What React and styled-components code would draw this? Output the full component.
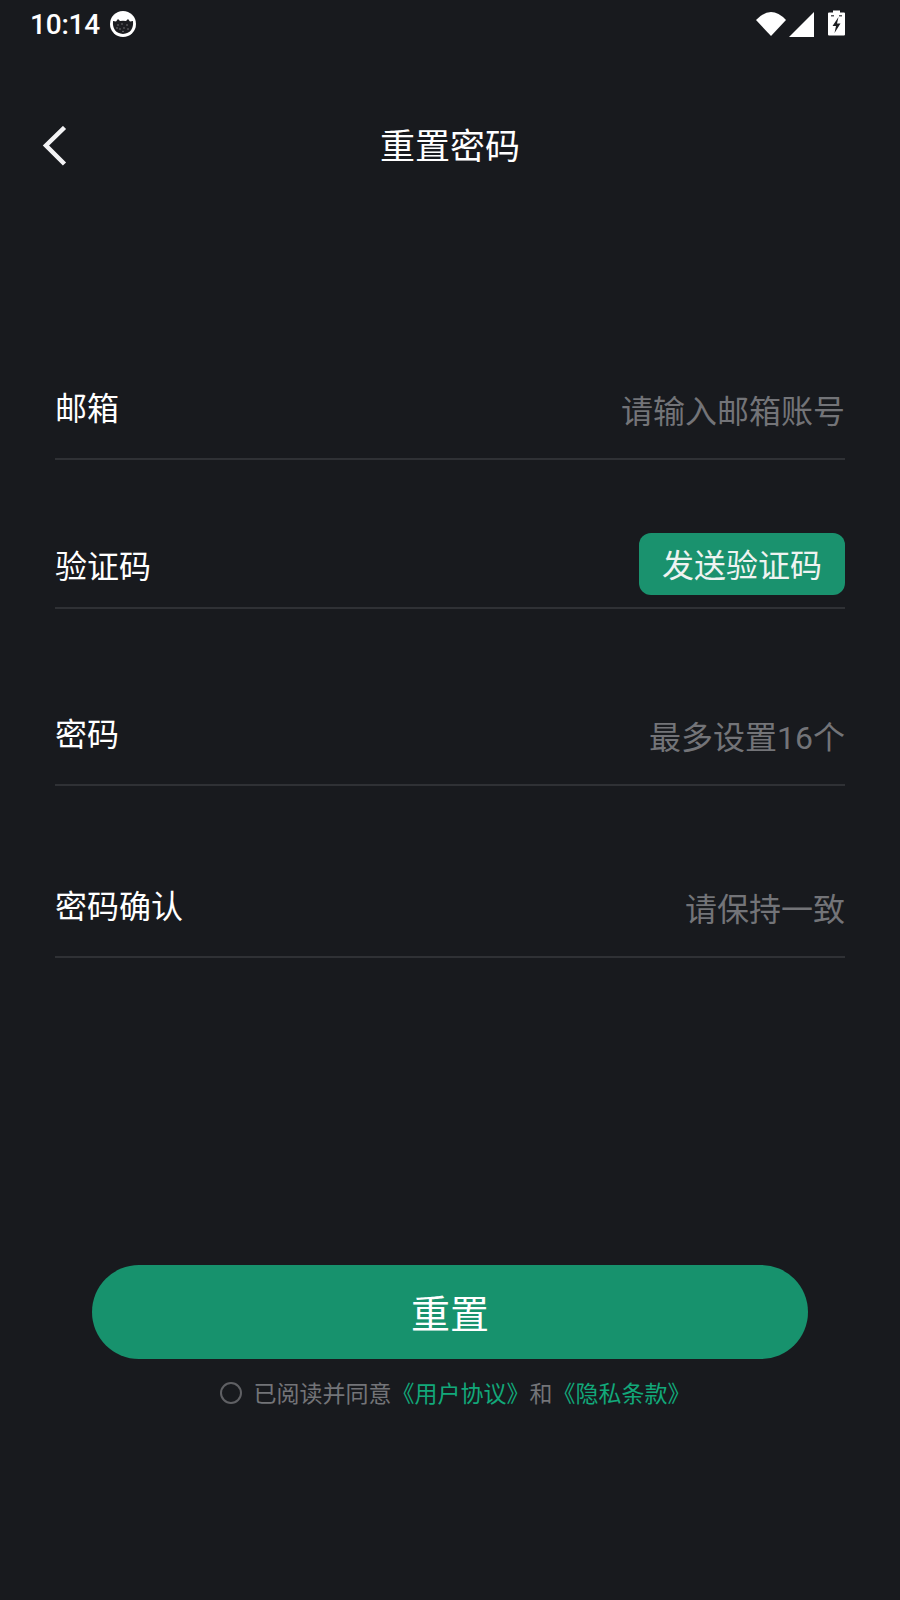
import React from "react";
import styled, { createGlobalStyle } from "styled-components";

const Global = createGlobalStyle`
  html, body { margin: 0; padding: 0; background: #181a1e; }
  * { box-sizing: border-box; }
`;
const FONT = `"Roboto", "Noto Sans CJK SC", sans-serif`;

const Page = styled.div`
  width: 900px; height: 1600px; background: #181a1e; color: #fff;
  font-family: ${FONT}; display: flex; flex-direction: column; overflow: hidden;
`;
const StatusBar = styled.div`
  height: 48px; padding: 0 55px 0 30px; display: flex; align-items: center; justify-content: space-between;
`;
const StatusLeft = styled.div`display: flex; align-items: center; gap: 10px;`;
const Time = styled.span`font-size: 28px; font-weight: 500; letter-spacing: -0.2px;`;
const StatusRight = styled.div`display: flex; align-items: center; gap: 3px;`;
const Header = styled.div`
  height: 100px; margin-top: 48px; padding-left: 41px; display: flex; align-items: center; position: relative;
`;
const Title = styled.h1`
  position: absolute; left: 0; right: 0; top: 2px; bottom: 0; margin: 0; text-align: center;
  font-size: 35px; font-weight: 400; line-height: 100px; pointer-events: none;
`;
const Form = styled.div`padding: 0 55px; margin-top: 165px; display: flex; flex-direction: column;`;
const Row = styled.div`
  height: ${p => p.$h}px; border-bottom: 2px solid #2f3135;
  display: flex; align-items: flex-end; justify-content: space-between; padding-bottom: ${p => p.$pb}px;
`;
const Label = styled.span`font-size: 32px; line-height: 44px; position: relative; top: ${p => p.$top}px;`;
const Hint = styled.span`font-size: 32px; line-height: 44px; color: #737478;`;
const SendBtn = styled.button`
  width: 206px; height: 62px; border: 0; border-radius: 12px; background: #1a926e; color: #eef3f1;
  font: 400 32px/44px ${FONT}; padding: 3px 0 0;
`;
const Footer = styled.div`margin-top: 307px; display: flex; flex-direction: column; align-items: center;`;
const ResetBtn = styled.button`
  width: 716px; height: 94px; border: 0; border-radius: 47px; background: #17926d; color: #fff;
  font: 400 39px/54px ${FONT}; padding: 6px 0 0;
`;
const Agree = styled.div`
  margin: 20px 0 0 10px; display: flex; align-items: center; font-size: 23px; line-height: 32px; color: #737478;
`;
const Radio = styled.span`
  width: 22px; height: 22px; border: 2.5px solid #5f6064; border-radius: 50%; margin-right: 12px; position: relative; top: -2px;
`;
const LinkText = styled.span`color: #12a87a;`;

const Cat = () => (
  <svg width="26" height="26" viewBox="0 0 26 26">
    <circle cx="13" cy="13" r="13" fill="#fff" />
    <path d="M3 10 L6 10.5 L8 8 L10 10 Q13 9.4 16 10 L18 8 L20 10.5 L23 10 Q24 22 13 23 Q2 22 3 10Z" fill="#1b1c20" />
    <g fill="#8a8b8e">
      <circle cx="8" cy="14" r="0.7" /><circle cx="12" cy="13" r="0.7" /><circle cx="17" cy="14" r="0.7" />
      <circle cx="10" cy="18" r="0.7" /><circle cx="14" cy="17" r="0.7" /><circle cx="18" cy="18" r="0.7" />
      <circle cx="13" cy="20.5" r="0.7" /><circle cx="7" cy="17" r="0.7" />
    </g>
  </svg>
);
const Wifi = () => (
  <svg width="30" height="26" viewBox="0 0 30 26">
    <path d="M0 9 Q15 -7 30 9 L15 25Z" fill="#fff" />
  </svg>
);
const Signal = () => (
  <svg width="25" height="25" viewBox="0 0 25 25" style={{ marginTop: 1 }}>
    <path d="M0 25 L25 0 V25Z" fill="#fff" />
  </svg>
);
const Battery = () => (
  <svg width="17" height="26" viewBox="0 0 17 26" style={{ marginLeft: 11, marginTop: -2 }}>
    <path d="M5 0.5 H12 V2.5 H16 Q17 2.5 17 3.5 V24.5 Q17 25.5 16 25.5 H1 Q0 25.5 0 24.5 V3.5 Q0 2.5 1 2.5 H5Z" fill="#fff" />
    <path d="M3 5 H6 V6.5 H3Z M11 5 H14 V6.5 H11Z" fill="#55565a" />
    <path d="M10.5 7 L4.5 16 H8 L6.5 23 L12.5 13.5 H9Z" fill="#1b1c20" />
  </svg>
);
const Back = () => (
  <svg width="28" height="40" viewBox="0 0 28 40">
    <path d="M23.5 1.5 L5 19.5 L23.5 38" fill="none" stroke="#f3f3f5" strokeWidth="4.5" />
  </svg>
);

export default function App() {
  return (
    <Page>
      <Global />
      <StatusBar>
        <StatusLeft><Time>10:14</Time><Cat /></StatusLeft>
        <StatusRight><Wifi /><Signal /><Battery /></StatusRight>
      </StatusBar>
      <Header>
        <Back />
        <Title>重置密码</Title>
      </Header>
      <Form>
        <Row $h={99} $pb={24}><Label $top={-3}>邮箱</Label><Hint>请输入邮箱账号</Hint></Row>
        <Row $h={149} $pb={12}><Label $top={-6}>验证码</Label><SendBtn>发送验证码</SendBtn></Row>
        <Row $h={177} $pb={24}><Label $top={-3}>密码</Label><Hint>最多设置16个</Hint></Row>
        <Row $h={172} $pb={24}><Label $top={-3}>密码确认</Label><Hint>请保持一致</Hint></Row>
      </Form>
      <Footer>
        <ResetBtn>重置</ResetBtn>
        <Agree>
          <Radio />
          已阅读并同意<LinkText>《用户协议》</LinkText>和<LinkText>《隐私条款》</LinkText>
        </Agree>
      </Footer>
    </Page>
  );
}
